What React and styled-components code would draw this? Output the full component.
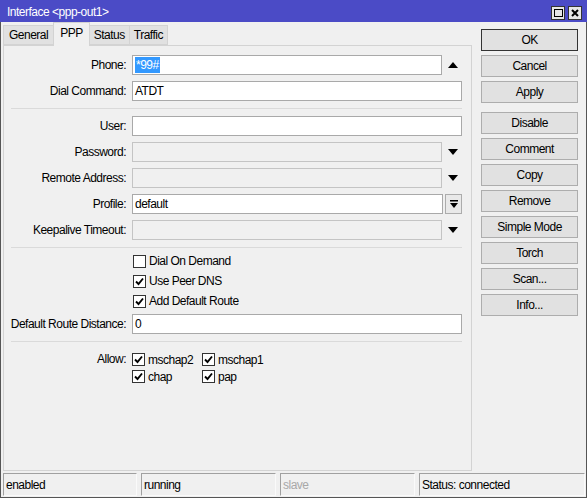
import React from 'react';
import styled, { createGlobalStyle } from 'styled-components';

const Global = createGlobalStyle`
  html, body { margin: 0; padding: 0; background: #f0f0f0; }
  * { box-sizing: border-box; }
  body {
    font-family: "Liberation Sans", Arial, sans-serif;
    font-size: 12px;
    letter-spacing: -0.5px;
    color: #000;
  }
`;

const Window = styled.div`
  width: 587px;
  height: 498px;
  display: flex;
  flex-direction: column;
  background: #f0f0f0;
  border: 1px solid #555;
  border-top: none;
`;

const TitleBar = styled.div`
  height: 22px;
  margin: 0 -1px;
  background: #4b4bc6;
  color: #fff;
  display: flex;
  align-items: center;
  padding: 0 5px 0 7px;
`;

const TitleText = styled.div`
  flex: 1;
  padding-top: 1px;
`;

const TitleButton = styled.div`
  width: 14px;
  height: 14px;
  margin-left: 3px;
  background: #e6e6e6;
  border: 1px solid #333;
  display: flex;
  align-items: center;
  justify-content: center;
  margin-top: 4px;
`;

const Body = styled.div`
  flex: 1;
  display: flex;
  padding: 0 8px 0 2px;
`;

const LeftCol = styled.div`
  width: 470px;
  display: flex;
  flex-direction: column;
  padding-bottom: 1px;
`;

const TabStrip = styled.div`
  height: 23px;
  display: flex;
  align-items: flex-end;
  position: relative;
  z-index: 1;
`;

const Tab = styled.div`
  height: ${p => (p.$active ? '24px' : '20px')};
  margin-bottom: ${p => (p.$active ? '-1px' : '0')};
  padding: ${p => (p.$active ? '3px 6px 0' : '0 4px')};
  background: ${p => (p.$active ? '#f0f0f0' : '#e1e1e1')};
  border: 1px solid #d3d3d3;
  border-bottom: ${p => (p.$active ? 'none' : '1px solid #d3d3d3')};
  margin-left: -1px;
  display: flex;
  align-items: ${p => (p.$active ? 'flex-start' : 'center')};
  &:first-child { margin-left: 0; padding: 0 5px; }
`;

const Panel = styled.div`
  flex: 1;
  border: 1px solid #d3d3d3;
  padding: 9px 9px 0 0;
  display: flex;
  flex-direction: column;
`;

const Row = styled.div`
  display: grid;
  grid-template-columns: 122px 1fr;
  column-gap: 6px;
  align-items: center;
  height: 20px;
  margin-top: ${p => p.$mt ?? 6}px;
`;

const Label = styled.div`
  text-align: right;
  white-space: nowrap;
`;

const FieldWrap = styled.div`
  display: flex;
  align-items: center;
  height: 100%;
`;

const Input = styled.div`
  flex: 1;
  height: 20px;
  background: ${p => (p.$disabled ? '#f0f0f0' : '#fff')};
  border: 1px solid ${p => (p.$disabled ? '#c4c4c4' : '#a9a9a9')};
  display: flex;
  align-items: center;
  padding-left: 2px;
`;

const Selected = styled.span`
  background: #3399ff;
  color: #fff;
  padding: 1px 1px;
`;

const ArrowSlot = styled.div`
  width: 19px;
  display: flex;
  align-items: center;
  justify-content: center;
  margin-left: 1px;
`;

const SmallButton = styled.div`
  width: 17px;
  height: 20px;
  margin-left: 2px;
  border: 1px solid #acacac;
  background: #e9e9e9;
  display: flex;
  align-items: center;
  justify-content: center;
`;

const Separator = styled.div`
  height: 1px;
  background: #dadada;
  margin: 7px 0 0 7px;
`;

const CheckRow = styled.div`
  display: flex;
  align-items: center;
  height: 20px;
  padding-left: 129px;
  margin-top: ${p => p.$mt || 0}px;
`;

const CheckItem = styled.label`
  display: flex;
  align-items: center;
`;

const Box = styled.span`
  width: 13px;
  height: 13px;
  border: 1px solid #333;
  background: #fff;
  margin-right: 3px;
  display: flex;
  align-items: center;
  justify-content: center;
`;

const AllowGrid = styled.div`
  display: grid;
  grid-template-columns: 122px 1fr;
  column-gap: 6px;
  margin-top: 9px;
`;

const AllowLabel = styled(Label)`
  line-height: 17px;
`;

const AllowChecks = styled.div`
  display: grid;
  grid-template-columns: 70px auto;
  grid-auto-rows: 17px;
  align-items: center;
`;

const RightCol = styled.div`
  width: 97px;
  margin-left: 9px;
  padding-top: 7px;
  display: flex;
  flex-direction: column;
`;

const Button = styled.div`
  height: 22px;
  margin-top: ${p => p.$mt ?? 4}px;
  background: #e1e1e1;
  border: 1px solid ${p => (p.$default ? '#333' : '#adadad')};
  display: flex;
  align-items: center;
  justify-content: center;
  &:first-child { margin-top: 0; }
`;

const StatusBar = styled.div`
  height: 25px;
  display: flex;
  gap: 4px;
  padding: 1px 1px 0 2px;
`;

const StatusField = styled.div`
  width: ${p => (p.$w ? p.$w + 'px' : 'auto')};
  flex: ${p => (p.$w ? 'none' : '1')};
  height: 23px;
  border-top: 1px solid #a0a0a0;
  border-left: 1px solid #a0a0a0;
  border-right: 1px solid #fafafa;
  border-bottom: 1px solid #fafafa;
  color: ${p => (p.$dim ? '#a8a8a8' : '#000')};
  display: flex;
  align-items: center;
  padding-left: 2px;
`;

const Up = () => (
  <svg width="10" height="6" viewBox="0 0 10 6"><path d="M0 6 L5 0 L10 6 Z" fill="#000" /></svg>
);
const Down = () => (
  <svg width="10" height="6" viewBox="0 0 10 6"><path d="M0 0 L10 0 L5 6 Z" fill="#000" /></svg>
);
const DownBar = () => (
  <svg width="8" height="9" viewBox="0 0 8 9">
    <rect x="0" y="0" width="8" height="1.5" fill="#000" />
    <path d="M0 3 L8 3 L4 8 Z" fill="#000" />
  </svg>
);
const Tick = () => (
  <svg width="9" height="9" viewBox="0 0 9 9"><path d="M1 4.5 L3.5 7 L8 1.5" stroke="#000" strokeWidth="1.9" fill="none" /></svg>
);

function Check({ checked, children }) {
  return (
    <CheckItem>
      <Box>{checked && <Tick />}</Box>
      {children}
    </CheckItem>
  );
}

function Field({ label, value, disabled, arrow, mt }) {
  return (
    <Row $mt={mt}>
      <Label>{label}</Label>
      <FieldWrap>
        <Input $disabled={disabled}>{value}</Input>
        {arrow === 'up' && <ArrowSlot><Up /></ArrowSlot>}
        {arrow === 'down' && <ArrowSlot><Down /></ArrowSlot>}
        {arrow === 'button' && <SmallButton><DownBar /></SmallButton>}
      </FieldWrap>
    </Row>
  );
}

const buttons = ['OK', 'Cancel', 'Apply', 'Disable', 'Comment', 'Copy', 'Remove', 'Simple Mode', 'Torch', 'Scan...', 'Info...'];

export default function App() {
  return (
    <>
      <Global />
      <Window>
        <TitleBar>
          <TitleText>Interface &lt;ppp-out1&gt;</TitleText>
          <TitleButton>
            <svg width="9" height="8" viewBox="0 0 9 8"><rect x="0.5" y="0.5" width="8" height="7" fill="none" stroke="#000" /></svg>
          </TitleButton>
          <TitleButton>
            <svg width="8" height="8" viewBox="0 0 8 8"><path d="M1 1 L7 7 M7 1 L1 7" stroke="#000" strokeWidth="2" /></svg>
          </TitleButton>
        </TitleBar>
        <Body>
          <LeftCol>
            <TabStrip>
              <Tab>General</Tab>
              <Tab $active>PPP</Tab>
              <Tab>Status</Tab>
              <Tab>Traffic</Tab>
            </TabStrip>
            <Panel>
              <Field label="Phone:" value={<Selected>*99#</Selected>} arrow="up" mt={0} />
              <Field label="Dial Command:" value="ATDT" />
              <Separator />
              <Field label="User:" value="" mt={7} />
              <Field label="Password:" disabled arrow="down" />
              <Field label="Remote Address:" disabled arrow="down" />
              <Field label="Profile:" value="default" arrow="button" />
              <Field label="Keepalive Timeout:" disabled arrow="down" />
              <Separator />
              <CheckRow $mt={3}><Check>Dial On Demand</Check></CheckRow>
              <CheckRow><Check checked>Use Peer DNS</Check></CheckRow>
              <CheckRow><Check checked>Add Default Route</Check></CheckRow>
              <Field label="Default Route Distance:" value="0" mt={3} />
              <Separator />
              <AllowGrid>
                <AllowLabel>Allow:</AllowLabel>
                <AllowChecks>
                  <Check checked>mschap2</Check>
                  <Check checked>mschap1</Check>
                  <Check checked>chap</Check>
                  <Check checked>pap</Check>
                </AllowChecks>
              </AllowGrid>
            </Panel>
          </LeftCol>
          <RightCol>
            {buttons.map(b => (
              <Button key={b} $default={b === 'OK'} $mt={b === 'Disable' ? 9 : 4}>{b}</Button>
            ))}
          </RightCol>
        </Body>
        <StatusBar>
          <StatusField $w={134}>enabled</StatusField>
          <StatusField $w={135}>running</StatusField>
          <StatusField $w={135} $dim>slave</StatusField>
          <StatusField>Status: connected</StatusField>
        </StatusBar>
      </Window>
    </>
  );
}
